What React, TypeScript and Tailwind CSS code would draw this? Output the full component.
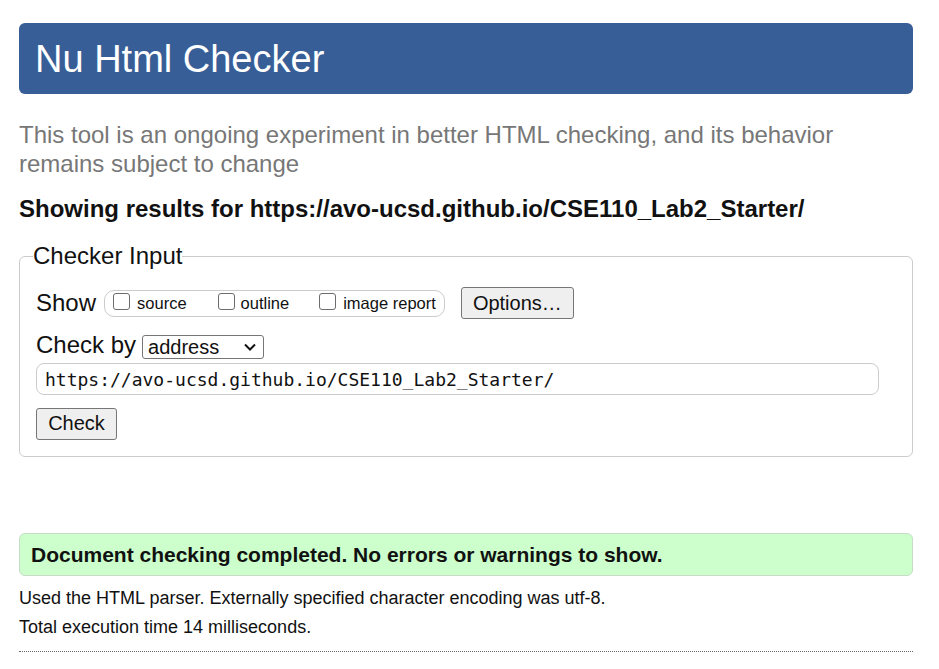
export default function App() {
  const sans = { fontFamily: '"Liberation Sans", Arial, sans-serif' };
  const box = "appearance-none shrink-0 w-[17px] h-[17px] border-[1.5px] border-[#6d6d6d] rounded-[3px] bg-white -mt-[4px]";
  return (
    <div className="min-h-screen bg-white text-[#111]" style={sans}>
      <div className="w-[894px] ml-[19px] pt-[23px]">
        <div className="h-[71px] bg-[#375e96] rounded-[6px] flex items-center px-[16px]">
          <h1 className="text-[38px] leading-none text-white">Nu Html Checker</h1>
        </div>

        <p className="mt-[26px] text-[24px] leading-[29px] text-[#777]">
          This tool is an ongoing experiment in better HTML checking, and its behavior remains subject to change
        </p>

        <p className="mt-[17px] text-[24px] leading-[28px] font-bold">
          Showing results for https://avo-ucsd.github.io/CSE110_Lab2_Starter/
        </p>

        <fieldset className="mt-[19px] border border-[#ccc] rounded-[6px] px-[13px] pb-[16px]">
          <legend className="text-[24px] leading-[28px] px-0">Checker Input</legend>
          <div className="pl-[3px]">
            <div className="mt-[17px] h-[32px] flex items-center">
              <span className="text-[24px] leading-[28px]">Show</span>
              <div className="ml-[8px] h-[27px] border border-[#ccc] rounded-[10px] flex items-center pl-[8px] pr-[8px] text-[16.5px]">
                <label className="flex items-center">
                  <input type="checkbox" className={box} />
                  <span className="ml-[7px]">source</span>
                </label>
                <label className="flex items-center ml-[31px]">
                  <input type="checkbox" className={box} />
                  <span className="ml-[6px]">outline</span>
                </label>
                <label className="flex items-center ml-[30px]">
                  <input type="checkbox" className={box} />
                  <span className="ml-[7px]">image report</span>
                </label>
              </div>
              <button className="ml-[16px] h-[32px] w-[113px] bg-[#efefef] border border-[#767676] rounded-[3px] text-[20px]">
                Options…
              </button>
            </div>

            <div className="mt-[14px] h-[28px] flex items-center">
              <span className="text-[24px] leading-[28px] -mt-[4px]">Check by</span>
              <div className="ml-[6px] h-[24px] w-[122px] border border-[#767676] rounded-[3px] flex items-center justify-between pl-[5px] pr-[7px] text-[20px] leading-none">
                <span>address</span>
                <svg width="12" height="8" viewBox="0 0 12 8" fill="none">
                  <path d="M1 1.5 L6 6.5 L11 1.5" stroke="#111" strokeWidth="2" />
                </svg>
              </div>
            </div>

            <div className="mt-[2px] h-[32px] w-[843px] border border-[#ccc] rounded-[8px] flex items-center px-[8px]">
              <span className="text-[18px]" style={{ fontFamily: '"DejaVu Sans Mono", monospace' }}>
                https://avo-ucsd.github.io/CSE110_Lab2_Starter/
              </span>
            </div>

            <button className="mt-[13px] h-[32px] w-[81px] bg-[#efefef] border border-[#767676] rounded-[3px] text-[20px] leading-[24px] pb-[2px]">
              Check
            </button>
          </div>
        </fieldset>

        <div className="mt-[76px] h-[43px] bg-[#ccffcc] border border-[#c6dcc6] rounded-[6px] flex items-center px-[11px]">
          <p className="text-[21px] font-bold">Document checking completed. No errors or warnings to show.</p>
        </div>

        <p className="mt-[12px] text-[18px] leading-[21px]">
          Used the HTML parser. Externally specified character encoding was utf-8.
        </p>
        <p className="mt-[8px] text-[18px] leading-[21px]">Total execution time 14 milliseconds.</p>

        <div className="mt-[13px] border-t border-dotted border-[#666]" />
      </div>
    </div>
  );
}
